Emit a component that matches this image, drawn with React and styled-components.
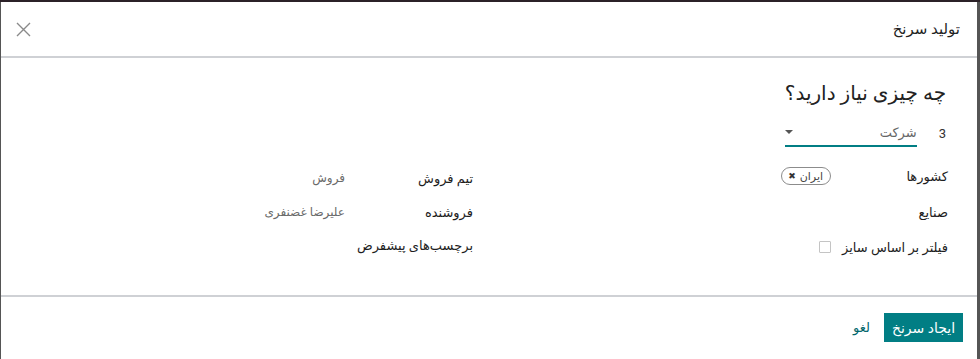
import React from 'react'
import styled, { createGlobalStyle } from 'styled-components'

const GlobalStyle = createGlobalStyle`
  html, body {
    margin: 0;
    padding: 0;
    background: #4e4e4e;
  }
  body {
    font-family: Roboto, "DejaVu Sans", sans-serif;
  }
  * {
    box-sizing: border-box;
  }
`

export default function App() {
  return (
    <>
      <GlobalStyle />
      <Backdrop>
        <Modal dir="rtl">
          <Header>
            <Title>تولید سرنخ</Title>
            <CloseBtn aria-label="close">
              <svg width="15" height="15" viewBox="0 0 15 15">
                <path d="M1 1 L14 14 M14 1 L1 14" stroke="#8a8a8a" strokeWidth="1.4" fill="none" />
              </svg>
            </CloseBtn>
          </Header>

          <Body>
            <Heading>چه چیزی نیاز دارید؟</Heading>
            <CountRow>
              <Count>3</Count>
              <Select>
                <SelectText>شرکت</SelectText>
                <Caret />
              </Select>
            </CountRow>

            <Groups>
              <Group $labelW={117} $top={0}>
                <Field $h={36}>
                  <Label>کشورها</Label>
                  <Value>
                    <Tag>
                      ایران
                      <TagX>✖</TagX>
                    </Tag>
                  </Value>
                </Field>
                <Field $h={36}>
                  <Label>صنایع</Label>
                  <Value />
                </Field>
                <Field $h={34}>
                  <Label>فیلتر بر اساس سایز</Label>
                  <Value>
                    <Checkbox />
                  </Value>
                </Field>
              </Group>

              <Group $labelW={128} $top={3}>
                <Field $h={34}>
                  <Label>تیم فروش</Label>
                  <Value>فروش</Value>
                </Field>
                <Field $h={34}>
                  <Label>فروشنده</Label>
                  <Value>علیرضا غضنفری</Value>
                </Field>
                <Field $h={33}>
                  <Label>برچسب‌های پیشفرض</Label>
                  <Value />
                </Field>
              </Group>
            </Groups>
          </Body>

          <Footer>
            <PrimaryBtn>ایجاد سرنخ</PrimaryBtn>
            <LinkBtn>لغو</LinkBtn>
          </Footer>
        </Modal>
      </Backdrop>
    </>
  )
}

const Backdrop = styled.div`
  height: 359px;
  border-top: 2px solid #2b2128;
  padding: 0 3px 0 1px;
  background: #555555;
  overflow: hidden;
`
const Modal = styled.div`
  background: #ffffff;
  height: 100%;
  display: flex;
  flex-direction: column;
  color: #212529;
`
const Header = styled.div`
  height: 56px;
  flex-shrink: 0;
  display: flex;
  align-items: center;
  justify-content: space-between;
  padding: 0 17px 0 15px;
  border-bottom: 2px solid #cfd1d5;
`
const Title = styled.div`
  font-size: 15px;
  color: #222;
`
const CloseBtn = styled.div`
  display: flex;
  align-items: center;
  margin-top: 1px;
`
const Body = styled.div`
  flex: 1;
  padding: 22px 29px 0 29px;
`
const Heading = styled.div`
  font-size: 20px;
  line-height: 26px;
  color: #222;
  margin-right: 2px;
`
const CountRow = styled.div`
  display: flex;
  align-items: flex-end;
  margin-top: 15px;
  margin-right: 2px;
  gap: 22px;
`
const Count = styled.div`
  font-size: 13px;
  color: #333;
  padding-bottom: 6px;
`
const Select = styled.div`
  width: 132px;
  height: 26px;
  border-bottom: 2px solid #017e84;
  display: flex;
  align-items: center;
  justify-content: space-between;
  padding-bottom: 2px;
`
const SelectText = styled.div`
  font-size: 13px;
  color: #666;
`
const Caret = styled.div`
  width: 0;
  height: 0;
  border-left: 4px solid transparent;
  border-right: 4px solid transparent;
  border-top: 4px solid #555;
`
const Groups = styled.div`
  display: grid;
  grid-template-columns: 475px 1fr;
  margin-top: 11px;
`
const Group = styled.div`
  display: flex;
  flex-direction: column;
  padding-top: ${p => p.$top}px;
  --label-w: ${p => p.$labelW}px;
`
const Field = styled.div`
  display: flex;
  align-items: center;
  height: ${p => p.$h}px;
`
const Label = styled.div`
  width: var(--label-w);
  flex-shrink: 0;
  font-size: 13px;
  color: #1d1d1d;
  white-space: nowrap;
`
const Value = styled.div`
  font-size: 12px;
  color: #6a6a6a;
  display: flex;
  align-items: center;
`
const Tag = styled.span`
  display: inline-flex;
  align-items: center;
  gap: 4px;
  height: 18px;
  padding: 0 7px 0 6px;
  border: 1px solid #8c8c8c;
  border-radius: 9px;
  font-size: 11px;
  color: #444;
`
const TagX = styled.span`
  font-size: 9px;
  color: #333;
`
const Checkbox = styled.span`
  width: 12px;
  height: 12px;
  border: 1px solid #c4c4c4;
  border-radius: 1px;
`
const Footer = styled.div`
  height: 64px;
  flex-shrink: 0;
  border-top: 2px solid #cfd1d5;
  display: flex;
  align-items: flex-start;
  gap: 14px;
  padding: 16px 14px 0;
`
const PrimaryBtn = styled.div`
  background: #017e84;
  color: #fff;
  font-size: 14px;
  height: 29px;
  width: 79px;
  display: flex;
  align-items: center;
  justify-content: center;
`
const LinkBtn = styled.div`
  color: #01666b;
  font-size: 13px;
  height: 29px;
  display: flex;
  align-items: center;
`
